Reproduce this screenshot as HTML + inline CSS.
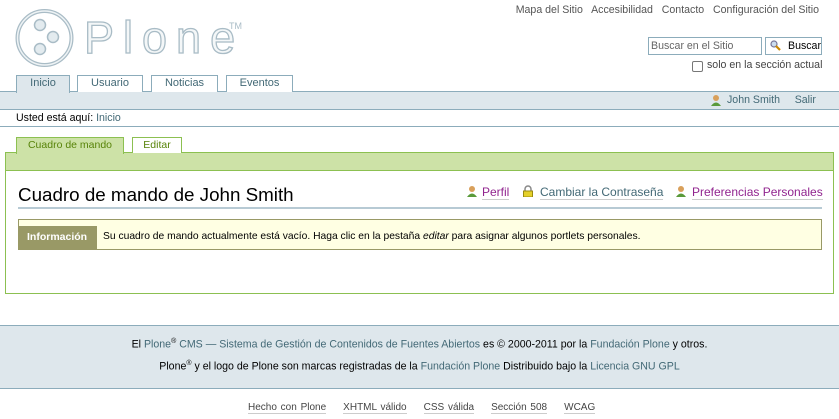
<!DOCTYPE html>
<html><head><meta charset="utf-8"><style>
*{margin:0;padding:0;box-sizing:border-box}
body{width:839px;height:419px;background:#fff;font-family:"Liberation Sans",sans-serif;font-size:11px;color:#000;position:relative;overflow:hidden}
.a{position:absolute;white-space:nowrap}
a{color:#436976;text-decoration:none}
.tab{position:absolute;top:75px;height:17px;border:1px solid #8cacbb;border-bottom:none;background:#fff;color:#436976;text-align:center;line-height:15px;font-size:11px}
.gtab{position:absolute;top:137px;height:16px;border:1px solid #8cc051;border-bottom:none;background:#fff;color:#578308;text-align:center;line-height:14px;font-size:10.5px}
.ul{border-bottom:1px solid #ccc}
</style></head><body>
<svg class="a" style="left:14px;top:8px" width="64" height="62" viewBox="14 8 64 62">
<circle cx="44.5" cy="38" r="27" fill="none" stroke="#a9bcc6" stroke-width="4"/>
<circle cx="44.5" cy="38" r="27" fill="none" stroke="#eef3f5" stroke-width="1.5"/>
<g fill="#e3ebef" stroke="#a9bcc6" stroke-width="1.5"><circle cx="40" cy="25" r="5.5"/><circle cx="53" cy="37" r="5.5"/><circle cx="40" cy="49" r="5.5"/></g>
</svg>
<div class="a" style="left:84px;top:12px;font-size:45px;letter-spacing:9px;color:#f4f7f8;-webkit-text-stroke:1.3px #a9bcc6;font-family:'Liberation Sans',sans-serif">Plone</div>
<div class="a" style="left:229px;top:21px;font-size:9px;color:#a9bcc6">TM</div>

<div class="a" style="right:20px;top:4px;color:#555;font-size:10.6px">Mapa del Sitio &nbsp; Accesibilidad &nbsp; Contacto &nbsp; Configuración del Sitio</div>
<div class="a" style="left:648px;top:37px;width:114px;height:18px;border:1px solid #8cacbb;color:#666;padding:2px 2px;font-size:10.6px">Buscar en el Sitio</div>
<div class="a" style="left:765px;top:37px;width:57px;height:18px;border:1px solid #8cacbb;font-size:10.6px;padding:2px 0 0 22px">Buscar</div>
<svg class="a" style="left:770px;top:40px" width="12" height="12"><circle cx="4" cy="4" r="3" fill="#cde" stroke="#779" stroke-width="1.2"/><path d="M6 6 L10 10" stroke="#c80" stroke-width="2.2"/></svg>
<div class="a" style="left:692px;top:61px;width:11px;height:11px;border:1px solid #777;border-radius:2px"></div>
<div class="a" style="left:707px;top:59px;color:#444;font-size:10.6px">solo en la sección actual</div>

<div class="a" style="left:0;top:91px;width:839px;height:19px;background:#dee7ec;border-top:1px solid #8cacbb;border-bottom:1px solid #8cacbb"></div>
<div class="tab" style="left:16px;width:54px;background:#dee7ec;height:18px">Inicio</div>
<div class="tab" style="left:77px;width:66px">Usuario</div>
<div class="tab" style="left:151px;width:67px">Noticias</div>
<div class="tab" style="left:226px;width:67px">Eventos</div>
<svg class="a" style="left:710px;top:94px" width="12" height="12"><circle cx="6" cy="4" r="3" fill="#d9a05b"/><path d="M1 12 Q6 5 11 12Z" fill="#5a9a3a"/></svg>
<div class="a" style="left:727px;top:94px;font-size:10.6px"><a>John Smith</a> &nbsp;&nbsp;&nbsp; <a>Salir</a></div>
<div class="a" style="left:16px;top:112px;font-size:10.6px">Usted está aquí: <a>Inicio</a></div>
<div class="a" style="left:0;top:126px;width:839px;height:1px;background:#8cacbb"></div>

<div class="a" style="left:5px;top:152px;width:829px;height:142px;border:1px solid #8cc051"></div>
<div class="a" style="left:6px;top:153px;width:827px;height:18px;background:#cde2a7;border-bottom:1px solid #8cc051"></div>
<div class="gtab" style="left:16px;width:108px;background:#cde2a7;height:17px">Cuadro de mando</div>
<div class="gtab" style="left:132px;width:50px">Editar</div>

<div class="a" style="left:18px;top:184px;font-size:18.8px">Cuadro de mando de John Smith</div>
<div class="a" style="left:18px;top:207px;width:804px;height:2px;background:#b7cad4"></div>
<svg class="a" style="left:466px;top:185px" width="12" height="12"><circle cx="6" cy="4" r="3" fill="#d9a05b"/><path d="M1 12 Q6 5 11 12Z" fill="#5a9a3a"/></svg>
<div class="a ul" style="left:482px;top:185px;font-size:12px;color:#91248f">Perfil</div>
<svg class="a" style="left:522px;top:185px" width="12" height="12"><path d="M3 6V4a3 3 0 016 0v2" fill="none" stroke="#888" stroke-width="1.5"/><rect x="1.5" y="6" width="9" height="6" fill="#e4d02a" stroke="#9a8a10"/></svg>
<div class="a ul" style="left:540px;top:185px;font-size:12px;color:#436976">Cambiar la Contraseña</div>
<svg class="a" style="left:675px;top:185px" width="12" height="12"><circle cx="6" cy="4" r="3" fill="#d9a05b"/><path d="M1 12 Q6 5 11 12Z" fill="#5a9a3a"/></svg>
<div class="a ul" style="left:692px;top:185px;font-size:12px;color:#91248f">Preferencias Personales</div>

<div class="a" style="left:18px;top:219px;width:804px;height:31px;background:#ffffe3;border:1px solid #999966"></div>
<div class="a" style="left:18px;top:226px;width:79px;height:24px;background:#999966;color:#fff;font-weight:bold;font-size:10.5px;line-height:23px;padding-left:9px">Información</div>
<div class="a" style="left:103px;top:231px;font-size:10.3px">Su cuadro de mando actualmente está vacío. Haga clic en la pestaña <i>editar</i> para asignar algunos portlets personales.</div>

<div class="a" style="left:0;top:325px;width:839px;height:64px;background:#dee7ec;border-top:1px solid #8cacbb;border-bottom:1px solid #8cacbb"></div>
<div class="a" style="left:0;width:839px;text-align:center;top:338px;font-size:10.6px">El <a>Plone</a><sup style="font-size:7px">®</sup> <a>CMS — Sistema de Gestión de Contenidos de Fuentes Abiertos</a> es © 2000-2011 por la <a>Fundación Plone</a> y otros.</div>
<div class="a" style="left:0;width:839px;text-align:center;top:360px;font-size:10.6px">Plone<sup style="font-size:7px">®</sup> y el logo de Plone son marcas registradas de la <a>Fundación Plone</a> Distribuido bajo la <a>Licencia GNU GPL</a></div>
<div class="a" style="left:248px;top:402px;font-size:10px;color:#444;word-spacing:1px"><span class="ul">Hecho con Plone</span><span style="margin-left:17px" class="ul">XHTML válido</span><span style="margin-left:17px" class="ul">CSS válida</span><span style="margin-left:17px" class="ul">Sección 508</span><span style="margin-left:17px" class="ul">WCAG</span></div>
</body></html>
